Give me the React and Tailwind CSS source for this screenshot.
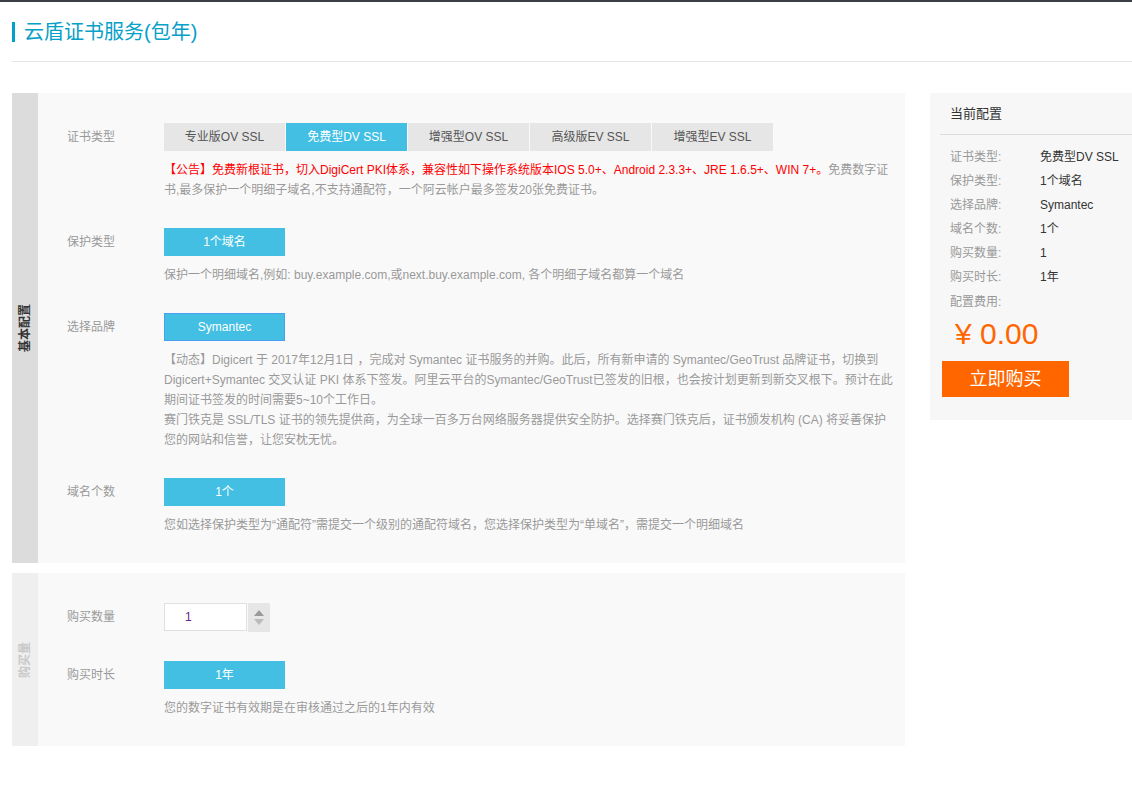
import React, { useState } from 'react';

const certTypes = ['专业版OV SSL', '免费型DV SSL', '增强型OV SSL', '高级版EV SSL', '增强型EV SSL'];

function Row({ label, children, last }) {
  return (
    <div className={`flex ${last ? '' : 'mb-[28px]'}`}>
      <div className="w-[126px] shrink-0 pl-[29px] h-[28px] flex items-center text-[#999]">{label}</div>
      <div className="flex-1 pr-[12px]">{children}</div>
    </div>
  );
}

function Desc({ children }) {
  return <div className="mt-[9px] leading-[20px] text-[#999]">{children}</div>;
}

function BlueBtn({ children, outlined }) {
  return (
    <div
      className={`w-[121px] h-[28px] flex items-center justify-center bg-[#42bfe3] text-white ${
        outlined ? 'border border-[#4a9ff0]' : ''
      }`}
    >
      {children}
    </div>
  );
}

// 左侧竖排分组标题
function SideTitle({ children, className }) {
  return (
    <div className={`w-[26px] shrink-0 flex items-center justify-center overflow-hidden ${className}`}>
      <span className="-rotate-90 whitespace-nowrap font-bold">{children}</span>
    </div>
  );
}

export default function App() {
  const [type, setType] = useState(1);
  const [qty, setQty] = useState(1);

  const summary = [
    ['证书类型:', certTypes[type]],
    ['保护类型:', '1个域名'],
    ['选择品牌:', 'Symantec'],
    ['域名个数:', '1个'],
    ['购买数量:', String(qty)],
    ['购买时长:', '1年'],
  ];

  return (
    <div className="min-h-[798px] bg-white border-t-2 border-[#3b3e42] text-[12px] font-['Liberation_Sans','Noto_Sans_CJK_SC',sans-serif]">
      {/* 标题 */}
      <div className="pl-[12px]">
        <div className="h-[59px] flex items-center">
          <span className="w-[3px] h-[20px] bg-[#00a2ca] mr-[9px]" />
          <h1 className="text-[20px] text-[#06a0c8] leading-none">云盾证书服务(包年)</h1>
        </div>
        <div className="h-px bg-[#e5e5e5]" />
      </div>

      <div className="flex pl-[12px] pt-[31px]">
        <div className="w-[893px] shrink-0">
          {/* 基本配置 */}
          <div className="flex bg-[#f9f9f9]">
            <SideTitle className="bg-[#dcdcdc] text-[#333]">基本配置</SideTitle>
            <div className="flex-1 pt-[30px] pb-[28px]">
              <Row label="证书类型">
                <div className="flex gap-px">
                  {certTypes.map((t, i) => (
                    <button
                      key={t}
                      onClick={() => setType(i)}
                      className={`w-[121px] h-[28px] flex items-center justify-center ${
                        i === type ? 'bg-[#42bfe3] text-white' : 'bg-[#e6e6e6] text-[#555]'
                      }`}
                    >
                      {t}
                    </button>
                  ))}
                </div>
                <Desc>
                  <span className="text-[#ff0000]">
                    【公告】免费新根证书，切入DigiCert PKI体系，兼容性如下操作系统版本IOS 5.0+、Android 2.3.3+、JRE 1.6.5+、WIN 7+。
                  </span>
                  免费数字证书,最多保护一个明细子域名,不支持通配符，一个阿云帐户最多签发20张免费证书。
                </Desc>
              </Row>

              <Row label="保护类型">
                <BlueBtn>1个域名</BlueBtn>
                <Desc>保护一个明细域名,例如: buy.example.com,或next.buy.example.com, 各个明细子域名都算一个域名</Desc>
              </Row>

              <Row label="选择品牌">
                <BlueBtn outlined>Symantec</BlueBtn>
                <Desc>
                  【动态】Digicert 于 2017年12月1日 ，完成对 Symantec 证书服务的并购。此后，所有新申请的 Symantec/GeoTrust 品牌证书，切换到
                  Digicert+Symantec 交叉认证 PKI 体系下签发。阿里云平台的Symantec/GeoTrust已签发的旧根，也会按计划更新到新交叉根下。预计在此期间证书签发的时间需要5~10个工作日。
                  <br />
                  赛门铁克是 SSL/TLS 证书的领先提供商，为全球一百多万台网络服务器提供安全防护。选择赛门铁克后，证书颁发机构 (CA) 将妥善保护您的网站和信誉，让您安枕无忧。
                </Desc>
              </Row>

              <Row label="域名个数" last>
                <BlueBtn>1个</BlueBtn>
                <Desc>您如选择保护类型为“通配符”需提交一个级别的通配符域名，您选择保护类型为“单域名”，需提交一个明细域名</Desc>
              </Row>
            </div>
          </div>

          {/* 购买量 */}
          <div className="flex bg-[#f9f9f9] mt-[10px]">
            <SideTitle className="bg-[#efefef] text-[#c8c8c8]">购买量</SideTitle>
            <div className="flex-1 pt-[30px] pb-[28px]">
              <Row label="购买数量">
                <div className="flex">
                  <input
                    value={qty}
                    onChange={(e) => setQty(e.target.value)}
                    className="w-[83px] h-[28px] border border-[#e0e0e0] bg-white pl-[20px] text-[#6a1b9a] outline-none"
                  />
                  <div className="w-[22px] h-[29px] ml-px bg-[#e6e6e6] flex flex-col items-center justify-center gap-[3px]">
                    <span className="w-0 h-0 border-x-[5px] border-x-transparent border-b-[6px] border-b-[#999]" />
                    <span className="w-0 h-0 border-x-[5px] border-x-transparent border-t-[6px] border-t-[#bbb]" />
                  </div>
                </div>
              </Row>
              <div className="h-px" />
              <Row label="购买时长" last>
                <BlueBtn>1年</BlueBtn>
                <Desc>您的数字证书有效期是在审核通过之后的1年内有效</Desc>
              </Row>
            </div>
          </div>
        </div>

        {/* 当前配置 */}
        <div className="ml-[25px] flex-1 self-start bg-[#f7f7f7] pb-[23px]">
          <div className="h-[41px] flex items-end pl-[20px] pb-[11px] text-[13px] text-[#333]">当前配置</div>
          <div className="ml-[10px] h-px bg-[#dddddd]" />
          <div className="pl-[20px] pt-[10px]">
            {summary.map(([k, v]) => (
              <div key={k} className="flex h-[24px] items-center">
                <span className="w-[90px] text-[#999]">{k}</span>
                <span className="text-[#333]">{v}</span>
              </div>
            ))}
            <div className="h-[25px] flex items-center text-[#999]">配置费用:</div>
            <div className="h-[38px] flex items-center pl-[5px] text-[30px] text-[#ff6600]">¥ 0.00</div>
          </div>
          <button className="ml-[12px] mt-[9px] w-[127px] h-[36px] bg-[#ff6600] text-white text-[18px]">立即购买</button>
        </div>
      </div>
    </div>
  );
}
